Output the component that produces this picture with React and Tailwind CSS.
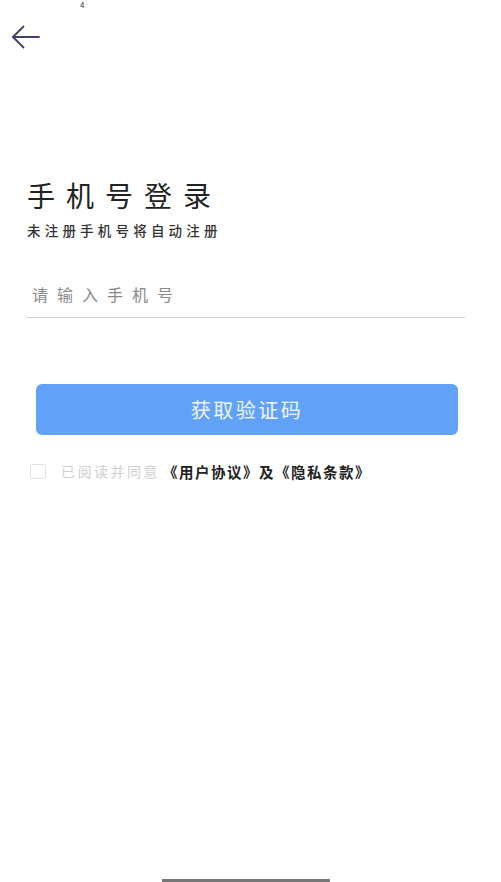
import React from 'react';

export default function App() {
  return (
    <div
      className="w-[501px] h-[882px] bg-white flex flex-col overflow-hidden"
      style={{ fontFamily: '"Noto Sans CJK SC", "Noto Sans", sans-serif' }}
    >
      {/* Status bar */}
      <div className="h-[12px] pl-[80px] text-[8px] leading-[10px] text-[#333]">4</div>

      {/* Back */}
      <div className="pl-[11px] pt-[13px]">
        <svg width="30" height="24" viewBox="0 0 30 24" fill="none" stroke="#3e4268" strokeWidth="1.8" strokeLinecap="round" strokeLinejoin="round">
          <path d="M2 12 H28" />
          <path d="M12.5 1.5 L2 12 L12.5 22.5" />
        </svg>
      </div>

      {/* Heading */}
      <div className="px-[27px] pt-[131px]">
        <h1 className="text-[28px] leading-[30px] tracking-[11px] text-[#222] font-normal">手机号登录</h1>
        <p className="mt-[12px] text-[13.5px] leading-[16px] tracking-[4.2px] text-[#333] font-medium">未注册手机号将自动注册</p>
      </div>

      {/* Phone input */}
      <div className="ml-[27px] mr-[36px] mt-[44px] border-b border-[#d0d0d0] pb-[11px]">
        <input
          type="tel"
          placeholder="请输入手机号"
          className="w-full pl-[5px] text-[16px] leading-[24px] tracking-[9px] text-[#333] placeholder:text-[#8a8a8a] outline-none bg-transparent"
        />
      </div>

      {/* Submit */}
      <button className="ml-[36px] mr-[43px] mt-[66px] h-[51px] rounded-[6px] bg-[#62a1f8] text-[20px] text-white/90 tracking-[2.5px]">
        获取验证码
      </button>

      {/* Agreement */}
      <div className="flex items-center pl-[30px] mt-[26px]">
        <span className="w-[16px] h-[15px] border border-[#e2e2e2] rounded-[2px]" />
        <span className="ml-[15px] text-[14px] tracking-[2.5px] text-[#cfcfcf]">已阅读并同意</span>
        <span className="ml-[3px] text-[14.5px] tracking-[1.5px] font-bold text-[#222]">《用户协议》及《隐私条款》</span>
      </div>

      {/* Home indicator */}
      <div className="mt-auto flex justify-center pr-[9px]">
        <div className="w-[168px] h-[3px] bg-[#777]" />
      </div>
    </div>
  );
}
